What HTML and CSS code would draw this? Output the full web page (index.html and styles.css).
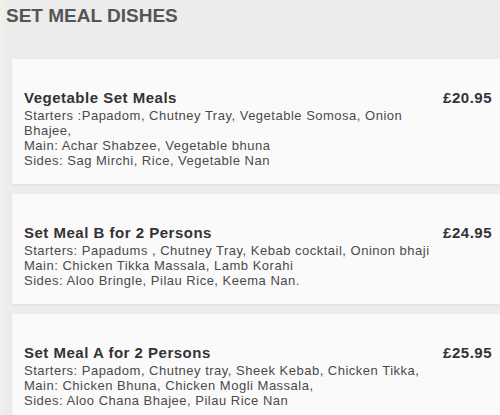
FILE: index.html
```html
<!DOCTYPE html>
<html lang="en">

<head>
    <meta charset="UTF-8">
    <meta name="viewport" content="width=device-width, initial-scale=1.0">
    <title>Set Meal Dishes</title>
    <link rel="stylesheet" href="styles.css">
</head>

<body>
    <div class="menu">
        <h2 class="menu-title">SET MEAL DISHES</h2>

        <div class="dish">
            <div class="dish-info">
                <h3 class="dish-name">Vegetable Set Meals</h3>
                <p class="dish-desc">Starters :Papadom, Chutney Tray, Vegetable Somosa, Onion Bhajee,<br>
                    Main: Achar Shabzee, Vegetable bhuna<br>
                    Sides: Sag Mirchi, Rice, Vegetable Nan</p>
            </div>
            <span class="dish-price">£20.95</span>
        </div>

        <div class="dish">
            <div class="dish-info">
                <h3 class="dish-name">Set Meal B for 2 Persons</h3>
                <p class="dish-desc">Starters: Papadums , Chutney Tray, Kebab cocktail, Oninon bhaji<br>
                    Main: Chicken Tikka Massala, Lamb Korahi<br>
                    Sides: Aloo Bringle, Pilau Rice, Keema Nan.</p>
            </div>
            <span class="dish-price">£24.95</span>
        </div>

        <div class="dish">
            <div class="dish-info">
                <h3 class="dish-name">Set Meal A for 2 Persons</h3>
                <p class="dish-desc">Starters: Papadom, Chutney tray, Sheek Kebab, Chicken Tikka,<br>
                    Main: Chicken Bhuna, Chicken Mogli Massala,<br>
                    Sides: Aloo Chana Bhajee, Pilau Rice Nan</p>
            </div>
            <span class="dish-price">£25.95</span>
        </div>
    </div>
</body>

</html>
```

FILE: styles.css
```css
body {
    margin: 0;
    padding: 0;
    background-color: #ececec;
    font-family: "Liberation Sans", Arial, sans-serif;
    color: #444;
}

.menu {
    border-left: 4px solid #f1efea;
    padding: 5px 0 0 8px;
    min-height: 100vh;
    box-sizing: border-box;
}

.menu-title {
    margin: 0 0 32px -6px;
    font-size: 19px;
    font-weight: bold;
    color: #555;
}

.dish {
    display: flex;
    justify-content: space-between;
    align-items: flex-start;
    background: #fafafa;
    padding: 30px 8px 16px 12px;
    margin-bottom: 10px;
    box-shadow: 0 1px 2px rgba(0, 0, 0, 0.06);
}

.dish-name {
    margin: 0 0 2px;
    font-size: 15px;
    letter-spacing: 0.5px;
    font-weight: bold;
    color: #333;
}

.dish-desc {
    margin: 0;
    font-size: 13px;
    letter-spacing: 0.5px;
    line-height: 15px;
    color: #4a4a4a;
    max-width: 412px;
}

.dish-price {
    font-size: 15px;
    letter-spacing: 0.5px;
    font-weight: bold;
    color: #333;
}
```
